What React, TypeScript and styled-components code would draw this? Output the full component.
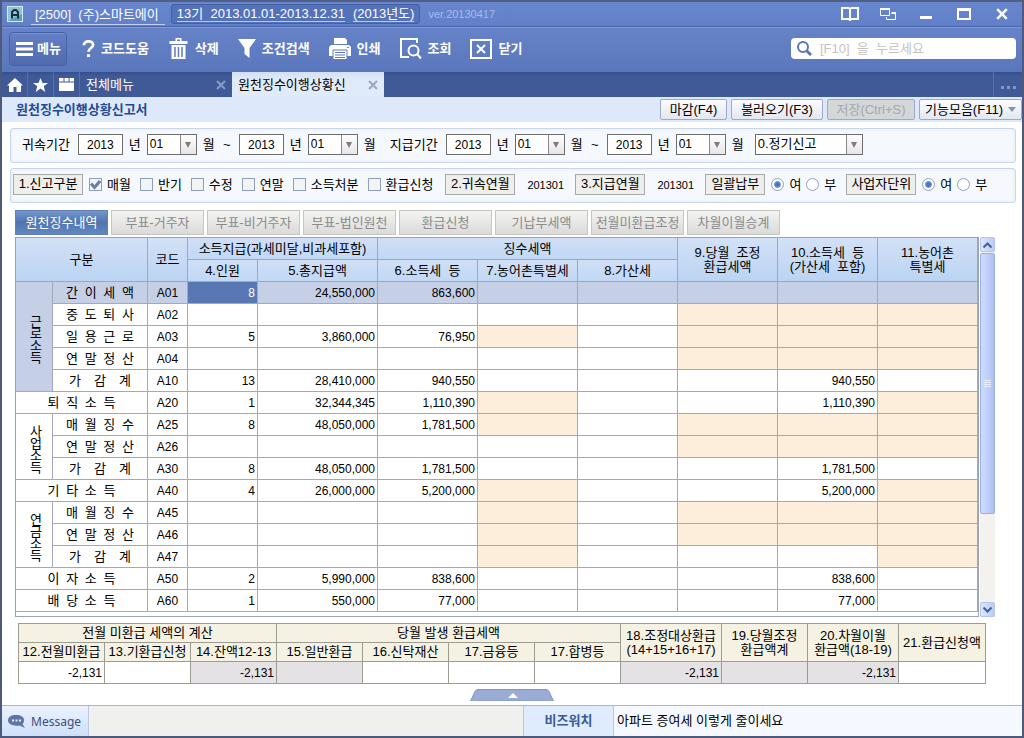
import React from "react";
import styled, { createGlobalStyle, css } from "styled-components";

const GlobalStyle = createGlobalStyle`
  * { box-sizing: border-box; }
  body {
    margin: 0;
    font-family: "Liberation Sans", "Noto Sans CJK KR", sans-serif;
    font-size: 13px;
    line-height: 16px;
    color: #000;
  }
  button, input, select { font: inherit; color: inherit; margin: 0; padding: 0; }
  button { cursor: pointer; }
`;

/* ---------- window frame ---------- */

const Window = styled.div`
  display: flex;
  flex-direction: column;
  min-height: 100vh;
  background: #fff;
  border: 2px solid #4d5a7e;
  border-top-color: #4f5f86;
`;

const TitleBar = styled.header`
  display: flex;
  align-items: center;
  height: 25px;
  padding-left: 5px;
  color: #fff;
  background: linear-gradient(#6886ce, #6280c8);
  border-bottom: 1px solid #4a65a8;
`;

const Logo = styled.svg`
  width: 16px;
  height: 16px;
  margin-right: 8px;
`;

const Company = styled.a`
  height: 21px;
  padding: 2px 6px 0 4px;
  line-height: 17px;
  color: inherit;
  text-decoration: none;
  white-space: pre;
  border-bottom: 1px solid #c3d0f0;
`;

const Period = styled.div`
  display: flex;
  gap: 8px;
  height: 20px;
  margin-left: 6px;
  padding: 1px 5px;
  background: #5472b8;
  border: 1px solid #4560a3;
  border-radius: 3px;
`;

const PeriodLink = styled.a`
  height: 16px;
  line-height: 15px;
  color: inherit;
  text-decoration: none;
  white-space: pre;
  border-bottom: 1px solid #b9c7ea;
`;

const Version = styled.span`
  margin-left: 8px;
  font-size: 11px;
  color: #a9baea;
`;

const WindowButtons = styled.div`
  display: flex;
  gap: 16px;
  margin-left: auto;
  padding-right: 9px;
`;

const GlyphButton = styled.button`
  display: flex;
  align-items: center;
  justify-content: center;
  width: 22px;
  height: 20px;
  background: none;
  border: 0;
  color: #fff;
`;

/* ---------- toolbar ---------- */

const Toolbar = styled.nav`
  display: flex;
  align-items: center;
  height: 45px;
  padding: 0 6px 3px 7px;
  background: linear-gradient(#6683c9, #5f7cc0 60%, #5a77bd);
  border-top: 1px solid #7f99da;
  color: #fff;
`;

const ToolButton = styled.button<{ $framed?: boolean }>`
  display: flex;
  align-items: center;
  gap: 6px;
  height: 34px;
  margin-right: 19px;
  background: none;
  border: 0;
  color: #fff;
  font-weight: bold;
  ${(p) =>
    p.$framed &&
    css`
      width: 58px;
      margin-right: 15px;
      padding-left: 6px;
      gap: 4px;
      background: linear-gradient(#6380c6, #5069ac);
      border: 1px solid #4761a6;
      border-radius: 4px;
      box-shadow: inset 0 1px #7791d2;
    `}
`;

const SearchBox = styled.label`
  display: flex;
  align-items: center;
  gap: 8px;
  width: 225px;
  height: 21px;
  margin-left: auto;
  padding: 0 6px;
  background: #fff;
  border-radius: 4px;
`;

const SearchInput = styled.input`
  flex: 1;
  min-width: 0;
  border: 0;
  outline: 0;
  background: none;
  color: #333;
  &::placeholder { color: #c3c3c3; opacity: 1; }
`;

/* ---------- document tabs ---------- */

const DocTabs = styled.div`
  display: flex;
  height: 25px;
  background: linear-gradient(#344f8c, #3f5a97 4px, #3f5a97);
`;

const IconTab = styled.button`
  display: flex;
  align-items: center;
  justify-content: center;
  width: 26px;
  background: none;
  border: 0;
  border-right: 1px solid #5470ae;
  color: #fff;
`;

const DocTab = styled.div<{ $active?: boolean }>`
  display: flex;
  align-items: center;
  justify-content: space-between;
  width: 152px;
  padding: 0 6px;
  color: ${(p) => (p.$active ? "#000" : "#fff")};
  background: ${(p) => (p.$active ? "linear-gradient(#d3e0f4, #e0ebfa 8px)" : "none")};
`;

const CloseTab = styled.button<{ $dark?: boolean }>`
  display: flex;
  background: none;
  border: 0;
  color: ${(p) => (p.$dark ? "#9aa6c0" : "#8a9cca")};
`;

const MoreTabs = styled.button`
  display: flex;
  align-items: flex-end;
  justify-content: center;
  width: 29px;
  margin-left: auto;
  padding-bottom: 7px;
  background: none;
  border: 0;
  border-left: 1px solid #5470ae;
  color: #7d95cf;
`;

const Heading = styled.div`
  display: flex;
  align-items: center;
  height: 25px;
  padding-left: 14px;
  background: #dde9fa;
`;

const PageTitle = styled.h1`
  margin: 0 auto 0 0;
  font-size: 13px;
  line-height: 16px;
  color: #1f4a96;
`;

const ActionButton = styled.button<{ $w: number }>`
  display: flex;
  align-items: center;
  justify-content: center;
  gap: 5px;
  width: ${(p) => p.$w}px;
  height: 21px;
  margin-left: 4px;
  line-height: 16px;
  background: linear-gradient(#fbfcfe, #e3e7ef);
  border: 1px solid #9fabc6;
  border-radius: 2px;
  white-space: nowrap;
  &:disabled {
    color: #a3a8ac;
    background: #d3d7d8;
  }
`;

/* ---------- filter panels ---------- */

const Panel = styled.section<{ $tight?: boolean }>`
  display: flex;
  align-items: center;
  gap: ${(p) => (p.$tight ? 0 : 6)}px;
  height: 35px;
  margin: ${(p) => (p.$tight ? "5px 6px 0 8px" : "6px 6px 0 8px")};
  padding: ${(p) => (p.$tight ? "0 2px 2px" : "0 10px 2px 11px")};
  background: #f5f8fd;
  border: 1px solid #cbd6e9;
  border-radius: 3px;
  box-shadow: inset 0 0 3px #d8e8fa;
  white-space: nowrap;
`;

const FieldLabel = styled.span<{ $second?: boolean }>`
  margin-left: ${(p) => (p.$second ? 8 : 0)}px;
  margin-right: 2px;
`;

const Unit = styled.span`
  width: 12px;
  text-align: center;
`;

const YearInput = styled.input`
  width: 45px;
  height: 21px;
  border: 1px solid #6d6d6d;
  background: #fff;
  text-align: center;
  font-size: 12px;
`;

const SelectBox = styled.div<{ $wide?: boolean }>`
  position: relative;
  width: ${(p) => (p.$wide ? 108 : 50)}px;
  height: 21px;
  margin-left: ${(p) => (p.$wide ? 5 : 0)}px;
  border: 1px solid #6d6d6d;
  background: #fff;
  font-size: ${(p) => (p.$wide ? 13 : 12)}px;
`;

const SelectField = styled.select`
  display: block;
  width: 100%;
  height: 17px;
  padding: 0 18px 0 2px;
  appearance: none;
  border: 0;
  outline: 0;
  background: none;
`;

const SelectArrow = styled.span`
  position: absolute;
  top: 0;
  right: 0;
  bottom: 0;
  display: flex;
  align-items: center;
  justify-content: center;
  width: 16px;
  border-left: 1px solid #8a8a8a;
  background: linear-gradient(#fdfdfd, #e6e6e6);
  color: #7c7c7c;
  pointer-events: none;
`;

const Caption = styled.span<{ $w: number; $gap?: number }>`
  width: ${(p) => p.$w}px;
  height: 21px;
  margin-left: ${(p) => p.$gap || 0}px;
  line-height: 18px;
  text-align: center;
  background: #eeeeec;
  border: 1px solid #a9a9a9;
`;

const MonthCode = styled.span`
  margin-left: 12px;
  width: 38px;
  font-size: 11px;
`;

const Choice = styled.label<{ $gap: number }>`
  display: flex;
  align-items: center;
  gap: 5px;
  margin-left: ${(p) => p.$gap}px;
`;

const Mark = styled.span`
  position: relative;
  display: block;
  width: 13px;
  height: 13px;
`;

const markBox = css`
  display: block;
  width: 13px;
  height: 13px;
  appearance: none;
  border: 1px solid #8fa0bd;
  background: #f3f4f6;
`;

const CheckInput = styled.input`
  ${markBox}
  & + svg { display: none; }
  &:checked + svg { display: block; }
`;

const CheckSvg = styled.svg`
  position: absolute;
  top: 1px;
  left: 1px;
  pointer-events: none;
`;

const RadioInput = styled.input`
  ${markBox}
  border-radius: 50%;
  background: #fff;
  &:checked { background: radial-gradient(circle, #4a76cc 2px, #7fa0e2 3px, #fff 4px); }
`;

/* ---------- form tabs ---------- */

const FormTabs = styled.div`
  display: flex;
  gap: 3px;
  margin: 7px 27px 0 13px;
`;

const FormTab = styled.button<{ $active?: boolean }>`
  width: 93px;
  height: 25px;
  line-height: 22px;
  white-space: nowrap;
  color: ${(p) => (p.$active ? "#fff" : "#8b8b8b")};
  background: ${(p) =>
    p.$active ? "linear-gradient(#7396cb, #4f74ae 50%, #6288c4)" : "linear-gradient(#f4f4f3, #dadad8)"};
  border: 1px solid ${(p) => (p.$active ? "#5d80ba" : "#c6c6c4")};
`;

/* ---------- main grid ---------- */

const GridArea = styled.div`
  display: flex;
  gap: 1px;
  margin: 2px 27px 0 13px;
`;

const GridFrame = styled.div`
  flex: 1;
  min-width: 0;
  padding-bottom: 4px;
  border: 1px solid #9ba3b8;
`;

const Grid = styled.table`
  width: 100%;
  table-layout: fixed;
  border-collapse: separate;
  border-spacing: 0;
`;

const gridCell = css`
  height: 22px;
  padding: 0;
  font-weight: normal;
  line-height: 14px;
  text-align: center;
  border-right: 1px solid #a3a8bc;
  border-bottom: 1px solid #a3a8bc;
`;

const HeadCell = styled.th<{ $tall?: boolean }>`
  ${gridCell}
  white-space: pre;
  background: ${(p) =>
    p.$tall ? "linear-gradient(#d2e1f6, #bbd4f3)" : "linear-gradient(#d0dff5, #c1d8f5)"};
  border-color: #98a9c8;
`;

const GroupCell = styled.th<{ $selected?: boolean }>`
  ${gridCell}
  padding: 6px 0 0 4px;
  background: ${(p) => (p.$selected ? "#c5cfe6" : "#fff")};
`;

const Stacked = styled.span`
  display: block;
  width: 13px;
  margin: 0 auto;
  line-height: 12px;
  word-break: break-all;
`;

const NameCell = styled.th<{ $selected?: boolean }>`
  ${gridCell}
  background: ${(p) => (p.$selected ? "#c5cfe6" : "#fff")};
`;

const Spread = styled.span<{ $narrow?: boolean }>`
  display: block;
  width: ${(p) => (p.$narrow ? 62 : 68)}px;
  margin: 0 auto;
  text-align-last: justify;
  white-space: nowrap;
`;

type Tone = "plain" | "row" | "active" | "locked";
const tones: Record<Tone, string> = {
  plain: "#fff",
  row: "#c5cfe6",
  active: "#5a77b5",
  locked: "#fdeddb",
};

const CodeCell = styled.td<{ $selected?: boolean }>`
  ${gridCell}
  font-size: 12px;
  background: ${(p) => (p.$selected ? "#c5cfe6" : "#fff")};
`;

const ValueCell = styled.td<{ $tone: Tone }>`
  ${gridCell}
  padding-right: 2px;
  text-align: right;
  font-size: 12px;
  color: ${(p) => (p.$tone === "active" ? "#fff" : "#000")};
  background: ${(p) => tones[p.$tone]};
`;

const ScrollBar = styled.div`
  display: flex;
  flex-direction: column;
  width: 15px;
  background: #f3f2ee;
`;

const ScrollButton = styled.button`
  display: flex;
  align-items: center;
  justify-content: center;
  height: 15px;
  background: linear-gradient(90deg, #dbe5fe, #b9ccf8);
  border: 1px solid #b4c6ee;
  border-radius: 2px;
  color: #46608f;
`;

const ScrollThumb = styled.div`
  display: flex;
  align-items: center;
  justify-content: center;
  flex: 260;
  margin-top: 1px;
  background: linear-gradient(90deg, #cfdcfe, #bccdfb 60%, #aebff0);
  border: 1px solid #98b0e6;
  border-radius: 2px;
  color: #e9f0ff;
`;

const ScrollRest = styled.div`
  flex: 88;
`;

/* ---------- refund summary ---------- */

const SummaryArea = styled.div`
  margin: 6px 36px 0 16px;
  border: solid #9d9c90;
  border-width: 1px 0 0 1px;
`;

const sumCell = css`
  padding: 0;
  font-weight: normal;
  line-height: 14px;
  border-right: 1px solid #9d9c90;
  border-bottom: 1px solid #9d9c90;
  white-space: pre;
`;

const SumHead = styled.th`
  ${sumCell}
  height: 19px;
  background: #f5f2e4;
`;

const SumValue = styled.td<{ $shaded?: boolean }>`
  ${sumCell}
  height: 22px;
  padding-right: 2px;
  text-align: right;
  font-size: 12px;
  background: ${(p) => (p.$shaded ? "#e4e2e4" : "#fff")};
`;

const Handle = styled.button`
  display: flex;
  margin: 5px auto 4px;
  background: none;
  border: 0;
`;

/* ---------- status bar ---------- */

const StatusBar = styled.footer`
  display: flex;
  height: 31px;
  margin-top: auto;
  line-height: 29px;
  background: #f0f0ee;
  border-top: 1px solid #a9b7cb;
`;

const MessageButton = styled.button`
  display: flex;
  align-items: center;
  gap: 5px;
  width: 87px;
  padding-left: 6px;
  font-family: "Noto Sans", sans-serif;
  font-size: 12px;
  color: #3c5077;
  background: linear-gradient(#eaf2fd, #cfe0fa);
  border: 0;
  border-right: 1px solid #b9c9e2;
`;

const NewsLabel = styled.strong`
  width: 91px;
  margin-left: auto;
  text-align: center;
  color: #3a5a94;
  background: #dfecfd;
  border: solid #b9c9e2;
  border-width: 0 1px;
`;

const NewsLink = styled.a`
  flex: 0 0 40%;
  padding-left: 3px;
  color: #000;
  text-decoration: none;
  background: #f5f8fe;
`;

/* ---------- data ---------- */

type Row = {
  group?: { name: string; span: number };
  wide?: boolean;
  name: string;
  code: string;
  values: string[];
  locked: number[];
};

const rows: Row[] = [
  { group: { name: "근로소득", span: 5 }, name: "간 이 세 액", code: "A01", values: ["8", "24,550,000", "863,600", "", "", "", "", ""], locked: [] },
  { name: "중 도 퇴 사", code: "A02", values: ["", "", "", "", "", "", "", ""], locked: [5, 6, 7] },
  { name: "일 용 근 로", code: "A03", values: ["5", "3,860,000", "76,950", "", "", "", "", ""], locked: [3, 5, 6, 7] },
  { name: "연 말 정 산", code: "A04", values: ["", "", "", "", "", "", "", ""], locked: [5, 6, 7] },
  { name: "가 감 계", code: "A10", values: ["13", "28,410,000", "940,550", "", "", "", "940,550", ""], locked: [] },
  { wide: true, name: "퇴 직 소 득", code: "A20", values: ["1", "32,344,345", "1,110,390", "", "", "", "1,110,390", ""], locked: [3, 7] },
  { group: { name: "사업소득", span: 3 }, name: "매 월 징 수", code: "A25", values: ["8", "48,050,000", "1,781,500", "", "", "", "", ""], locked: [3, 5, 6, 7] },
  { name: "연 말 정 산", code: "A26", values: ["", "", "", "", "", "", "", ""], locked: [5, 6, 7] },
  { name: "가 감 계", code: "A30", values: ["8", "48,050,000", "1,781,500", "", "", "", "1,781,500", ""], locked: [] },
  { wide: true, name: "기 타 소 득", code: "A40", values: ["4", "26,000,000", "5,200,000", "", "", "", "5,200,000", ""], locked: [3, 7] },
  { group: { name: "연금소득", span: 3 }, name: "매 월 징 수", code: "A45", values: ["", "", "", "", "", "", "", ""], locked: [3, 5, 6, 7] },
  { name: "연 말 정 산", code: "A46", values: ["", "", "", "", "", "", "", ""], locked: [3, 5, 6, 7] },
  { name: "가 감 계", code: "A47", values: ["", "", "", "", "", "", "", ""], locked: [3, 7] },
  { wide: true, name: "이 자 소 득", code: "A50", values: ["2", "5,990,000", "838,600", "", "", "", "838,600", ""], locked: [] },
  { wide: true, name: "배 당 소 득", code: "A60", values: ["1", "550,000", "77,000", "", "", "", "77,000", ""], locked: [] },
];

const gridColumns = [37, 95, 40, 70, 120, 100, 100, 100, 100, 100, 100];
const summaryColumns = [86, 86, 86, 86, 86, 86, 86, 101, 86, 91, 87];
const formTabs = ["원천징수내역", "부표-거주자", "부표-비거주자", "부표-법인원천", "환급신청", "기납부세액", "전월미환급조정", "차월이월승계"];
const reportKinds = ["매월", "반기", "수정", "연말", "소득처분", "환급신청"];
const summaryValues = ["-2,131", "", "-2,131", "", "", "", "", "-2,131", "", "-2,131", ""];
const shadedSummary = [2, 3, 7, 8, 9];

/* ---------- small parts ---------- */

const Cross = ({ size, width }: { size: number; width: number }) => (
  <svg width={size} height={size} viewBox="0 0 10 10" fill="none" stroke="currentColor" strokeWidth={width}>
    <path d="M1 1l8 8M9 1l-8 8" />
  </svg>
);

const Columns = ({ widths }: { widths: number[] }) => (
  <colgroup>
    {widths.map((w, i) => (
      <col key={i} style={{ width: w }} />
    ))}
  </colgroup>
);

function Select({ label, options, wide }: { label: string; options: string[]; wide?: boolean }) {
  return (
    <SelectBox $wide={wide}>
      <SelectField aria-label={label} defaultValue={options[0]}>
        {options.map((o) => (
          <option key={o}>{o}</option>
        ))}
      </SelectField>
      <SelectArrow>
        <svg width="6" height="6" viewBox="0 0 6 6" fill="currentColor"><path d="M0 0h6L3 6z" /></svg>
      </SelectArrow>
    </SelectBox>
  );
}

function MonthRange({ label, second }: { label: string; second?: boolean }) {
  return (
    <>
      <FieldLabel $second={second}>{label}</FieldLabel>
      <YearInput aria-label={`${label} 시작 연도`} defaultValue="2013" />
      <Unit>년</Unit>
      <Select label={`${label} 시작 월`} options={["01"]} />
      <Unit>월</Unit>
      <Unit>~</Unit>
      <YearInput aria-label={`${label} 종료 연도`} defaultValue="2013" />
      <Unit>년</Unit>
      <Select label={`${label} 종료 월`} options={["01"]} />
      <Unit>월</Unit>
    </>
  );
}

function YesNo({ name }: { name: string }) {
  return (
    <>
      <Choice $gap={6}>
        <Mark><RadioInput type="radio" name={name} defaultChecked /></Mark>여
      </Choice>
      <Choice $gap={5}>
        <Mark><RadioInput type="radio" name={name} /></Mark>부
      </Choice>
    </>
  );
}

export default function App() {
  return (
    <>
      <GlobalStyle />
      <Window>
        <TitleBar>
          <Logo viewBox="0 0 16 16">
            <rect x="0.5" y="0.5" width="15" height="15" fill="#8fc4d8" stroke="#d5edf5" />
            <path d="M1 15h14V8z" fill="#5b9fbd" />
            <path d="M5 12.500V6l2-2h2l2 2v6.500M5 9h6" fill="none" stroke="#1d2f45" strokeWidth="2" />
          </Logo>
          <Company href="#company">[2500]  (주)스마트에이</Company>
          <Period>
            <PeriodLink href="#period">13기  2013.01.01-2013.12.31</PeriodLink>
            <PeriodLink href="#year">(2013년도)</PeriodLink>
          </Period>
          <Version>ver.20130417</Version>
          <WindowButtons>
            <GlyphButton aria-label="도움말">
              <svg width="18" height="14" viewBox="0 0 18 14" fill="none" stroke="currentColor" strokeWidth="2">
                <path d="M9 13V2M1 1h6.500L9 2l1.500-1H17v11h-6.500L9 13l-1.500-1H1z" />
              </svg>
            </GlyphButton>
            <GlyphButton aria-label="창 배열">
              <svg width="16" height="13" viewBox="0 0 16 13" fill="none" stroke="currentColor">
                <path d="M0.500 1v6.500h9V1" />
                <path d="M0 1h10" strokeWidth="2" />
                <path d="M15.500 5v6.500h-9V9" />
                <path d="M11.500 5H16" strokeWidth="2" />
              </svg>
            </GlyphButton>
            <GlyphButton aria-label="최소화">
              <svg width="12" height="14" viewBox="0 0 12 14"><path d="M0 9h12v3H0z" fill="currentColor" /></svg>
            </GlyphButton>
            <GlyphButton aria-label="최대화">
              <svg width="14" height="12" viewBox="0 0 14 12" fill="none" stroke="currentColor">
                <path d="M1 1h12v10H1z" strokeWidth="2" />
                <path d="M0 1.500h14" strokeWidth="3" />
              </svg>
            </GlyphButton>
            <GlyphButton aria-label="창 닫기"><Cross size={12} width={2} /></GlyphButton>
          </WindowButtons>
        </TitleBar>

        <Toolbar>
          <ToolButton $framed>
            <svg width="17" height="16" viewBox="0 0 17 16" fill="currentColor">
              <path d="M0 1h17v3H0zM0 6.500h17v3H0zM0 12h17v3H0z" />
            </svg>
            메뉴
          </ToolButton>
          <ToolButton>
            <svg width="13" height="19" viewBox="0 0 14 19" fill="none" stroke="currentColor" strokeWidth="3">
              <path d="M2 6C2 .5 12 .5 12 5.500 12 9 7 9 7 13" />
              <path d="M5.300 17.200h3.400" />
            </svg>
            코드도움
          </ToolButton>
          <ToolButton>
            <svg width="21" height="22" viewBox="0 0 20 22" fill="currentColor">
              <path d="M7 0h6v3h6v3H1V3h6zM8.500 1.500V3h3V1.500zM3 7h14v14H3z" fillRule="evenodd" />
              <path d="M6.500 9v10M10 9v10M13.500 9v10" stroke="#5f7cc0" strokeWidth="1.500" />
            </svg>
            삭제
          </ToolButton>
          <ToolButton>
            <svg width="18" height="19" viewBox="0 0 18 19" fill="currentColor"><path d="M0 0h18l-6.500 9v10l-5-4V9z" /></svg>
            조건검색
          </ToolButton>
          <ToolButton>
            <svg width="22" height="22" viewBox="0 0 22 22">
              <path d="M5 0h11l2 2v4H5z" fill="currentColor" />
              <path d="M2 7h18l2 2v9H0V9z" fill="currentColor" />
              <path d="M4 12h14v9.500H4z" fill="currentColor" stroke="#5f7cc0" />
              <path d="M6 14.500h10M6 17h10M6 19.500h10" stroke="#5f7cc0" />
              <path d="M18 9h2v1h-2z" fill="#5f7cc0" />
            </svg>
            인쇄
          </ToolButton>
          <ToolButton>
            <svg width="22" height="21" viewBox="0 0 22 21" fill="none" stroke="currentColor" strokeWidth="2">
              <path d="M17 5V1H1v18h8" />
              <circle cx="13.500" cy="12.500" r="5" />
              <path d="M17 16l4 4.500" />
            </svg>
            조회
          </ToolButton>
          <ToolButton>
            <svg width="22" height="20" viewBox="0 0 22 20" fill="none" stroke="currentColor" strokeWidth="2">
              <path d="M1 1h20v18H1z" />
              <path d="M7 6l8 8M15 6l-8 8" />
            </svg>
            닫기
          </ToolButton>
          <SearchBox>
            <svg width="15" height="15" viewBox="0 0 15 15" fill="none" stroke="#5b78b4" strokeWidth="2">
              <circle cx="6" cy="6" r="5" />
              <path d="M9.500 9.500l4.500 4.500" strokeWidth="3" />
            </svg>
            <SearchInput aria-label="메뉴 검색" placeholder="[F10]  을  누르세요" />
          </SearchBox>
        </Toolbar>

        <DocTabs>
          <IconTab aria-label="홈">
            <svg width="16" height="14" viewBox="0 0 16 14" fill="currentColor"><path d="M8 0l8 7.500h-2V14H9.500V9h-3v5H2V7.500H0z" /></svg>
          </IconTab>
          <IconTab aria-label="즐겨찾기">
            <svg width="15" height="14" viewBox="0 0 15 14" fill="currentColor">
              <path d="M7.500 0l2 5H15l-4.300 3.300L12.300 14 7.500 10.600 2.700 14l1.600-5.700L0 5h5.500z" />
            </svg>
          </IconTab>
          <IconTab aria-label="메뉴 목록">
            <svg width="15" height="13" viewBox="0 0 15 13" fill="currentColor">
              <path d="M0 0h4.500v3.500H0zM5.500 0H9.500v3.500H5.500zM10.500 0H15v3.500h-4.500zM0 4.500h15V13H0z" />
            </svg>
          </IconTab>
          <DocTab>
            전체메뉴
            <CloseTab aria-label="전체메뉴 닫기"><Cross size={10} width={2} /></CloseTab>
          </DocTab>
          <DocTab $active>
            원천징수이행상황신
            <CloseTab $dark aria-label="원천징수이행상황신 닫기"><Cross size={10} width={2} /></CloseTab>
          </DocTab>
          <MoreTabs aria-label="탭 더보기">
            <svg width="15" height="5" viewBox="0 0 15 5" fill="currentColor"><path d="M0 1h3v3H0zM6 1h3v3H6zM12 1h3v3h-3z" /></svg>
          </MoreTabs>
        </DocTabs>

        <Heading>
          <PageTitle>원천징수이행상황신고서</PageTitle>
          <ActionButton $w={67}>마감(F4)</ActionButton>
          <ActionButton $w={92}>불러오기(F3)</ActionButton>
          <ActionButton $w={88} disabled>저장(Ctrl+S)</ActionButton>
          <ActionButton $w={103}>
            기능모음(F11)
            <svg width="8" height="5" viewBox="0 0 8 5" fill="#8994ac"><path d="M0 0h8L4 5z" /></svg>
          </ActionButton>
        </Heading>

        <Panel>
          <MonthRange label="귀속기간" />
          <MonthRange label="지급기간" second />
          <Select label="신고 유형" options={["0.정기신고"]} wide />
        </Panel>

        <Panel $tight>
          <Caption $w={70}>1.신고구분</Caption>
          {reportKinds.map((kind, i) => (
            <Choice key={kind} $gap={i === 0 ? 6 : 9}>
              <Mark>
                <CheckInput type="checkbox" defaultChecked={i === 0} />
                <CheckSvg width="11" height="11" viewBox="0 0 11 11" fill="none" stroke="#6b7bb0" strokeWidth="3">
                  <path d="M1 4.500l3.500 4L10 2" />
                </CheckSvg>
              </Mark>
              {kind}
            </Choice>
          ))}
          <Caption $w={70} $gap={12}>2.귀속연월</Caption>
          <MonthCode>201301</MonthCode>
          <Caption $w={70} $gap={10}>3.지급연월</Caption>
          <MonthCode>201301</MonthCode>
          <Caption $w={60} $gap={10}>일괄납부</Caption>
          <YesNo name="bulk" />
          <Caption $w={70} $gap={10}>사업자단위</Caption>
          <YesNo name="unit" />
        </Panel>

        <FormTabs>
          {formTabs.map((t, i) => (
            <FormTab key={t} $active={i === 0}>{t}</FormTab>
          ))}
        </FormTabs>

        <GridArea>
          <GridFrame>
            <Grid>
              <Columns widths={gridColumns} />
              <thead>
                <tr>
                  <HeadCell $tall rowSpan={2} colSpan={2}>구분</HeadCell>
                  <HeadCell $tall rowSpan={2}>코드</HeadCell>
                  <HeadCell colSpan={2}>소득지급(과세미달,비과세포함)</HeadCell>
                  <HeadCell colSpan={3}>징수세액</HeadCell>
                  <HeadCell $tall rowSpan={2}>{"9.당월  조정\n환급세액"}</HeadCell>
                  <HeadCell $tall rowSpan={2}>{"10.소득세  등\n(가산세  포함)"}</HeadCell>
                  <HeadCell $tall rowSpan={2}>{"11.농어촌\n특별세"}</HeadCell>
                </tr>
                <tr>
                  <HeadCell>4.인원</HeadCell>
                  <HeadCell>5.총지급액</HeadCell>
                  <HeadCell>6.소득세  등</HeadCell>
                  <HeadCell>7.농어촌특별세</HeadCell>
                  <HeadCell>8.가산세</HeadCell>
                </tr>
              </thead>
              <tbody>
                {rows.map((row, r) => (
                  <tr key={row.code}>
                    {row.group && (
                      <GroupCell rowSpan={row.group.span} $selected={r === 0}>
                        <Stacked>{row.group.name}</Stacked>
                      </GroupCell>
                    )}
                    <NameCell colSpan={row.wide ? 2 : 1} $selected={r === 0}>
                      <Spread $narrow={row.name === "가 감 계"}>{row.name}</Spread>
                    </NameCell>
                    <CodeCell $selected={r === 0}>{row.code}</CodeCell>
                    {row.values.map((v, c) => (
                      <ValueCell
                        key={c}
                        $tone={r === 0 ? (c === 0 ? "active" : "row") : row.locked.includes(c) ? "locked" : "plain"}
                      >
                        {v}
                      </ValueCell>
                    ))}
                  </tr>
                ))}
              </tbody>
            </Grid>
          </GridFrame>
          <ScrollBar>
            <ScrollButton aria-label="위로">
              <svg width="9" height="6" viewBox="0 0 9 6" fill="none" stroke="currentColor" strokeWidth="2"><path d="M0.500 5.500l4-4 4 4" /></svg>
            </ScrollButton>
            <ScrollThumb>
              <svg width="7" height="8" viewBox="0 0 7 8" stroke="currentColor"><path d="M0 .5h7M0 2.500h7M0 4.500h7M0 6.500h7" /></svg>
            </ScrollThumb>
            <ScrollRest />
            <ScrollButton aria-label="아래로">
              <svg width="9" height="6" viewBox="0 0 9 6" fill="none" stroke="currentColor" strokeWidth="2"><path d="M0.500 .5l4 4 4-4" /></svg>
            </ScrollButton>
          </ScrollBar>
        </GridArea>

        <SummaryArea>
          <Grid>
            <Columns widths={summaryColumns} />
            <thead>
              <tr>
                <SumHead colSpan={3}>전월 미환급 세액의 계산</SumHead>
                <SumHead colSpan={4}>당월 발생 환급세액</SumHead>
                <SumHead rowSpan={2}>{"18.조정대상환급\n(14+15+16+17)"}</SumHead>
                <SumHead rowSpan={2}>{"19.당월조정\n환급액계"}</SumHead>
                <SumHead rowSpan={2}>{"20.차월이월\n환급액(18-19)"}</SumHead>
                <SumHead rowSpan={2}>21.환급신청액</SumHead>
              </tr>
              <tr>
                <SumHead>12.전월미환급</SumHead>
                <SumHead>13.기환급신청</SumHead>
                <SumHead>14.잔액12-13</SumHead>
                <SumHead>15.일반환급</SumHead>
                <SumHead>16.신탁재산</SumHead>
                <SumHead>17.금융등</SumHead>
                <SumHead>17.합병등</SumHead>
              </tr>
            </thead>
            <tbody>
              <tr>
                {summaryValues.map((v, i) => (
                  <SumValue key={i} $shaded={shadedSummary.includes(i)}>{v}</SumValue>
                ))}
              </tr>
            </tbody>
          </Grid>
        </SummaryArea>

        <Handle aria-label="하단 패널 열기">
          <svg width="84" height="12" viewBox="0 0 84 12">
            <path d="M0.500 12L5 2.500Q6 .5 8 .5h68q2 0 3 2L83.500 12z" fill="#9aabd6" stroke="#8496c2" />
            <path d="M38 9l5-5 5 5z" fill="#fff" />
          </svg>
        </Handle>

        <StatusBar>
          <MessageButton>
            <svg width="18" height="13" viewBox="0 0 18 13">
              <path d="M8 0c5 0 8 2 8 5 0 2-.5 3-1.500 4L17 13l-5.500-2.500C5 11.500 0 9 0 5.500 0 2 3 0 8 0z" fill="#5f74a3" />
              <path d="M4 4.500h2v2H4zM7.500 4.500h2v2h-2zM11 4.500h2v2h-2z" fill="#e6effb" />
            </svg>
            Message
          </MessageButton>
          <NewsLabel>비즈워치</NewsLabel>
          <NewsLink href="#news">아파트 증여세 이렇게 줄이세요</NewsLink>
        </StatusBar>
      </Window>
    </>
  );
}
